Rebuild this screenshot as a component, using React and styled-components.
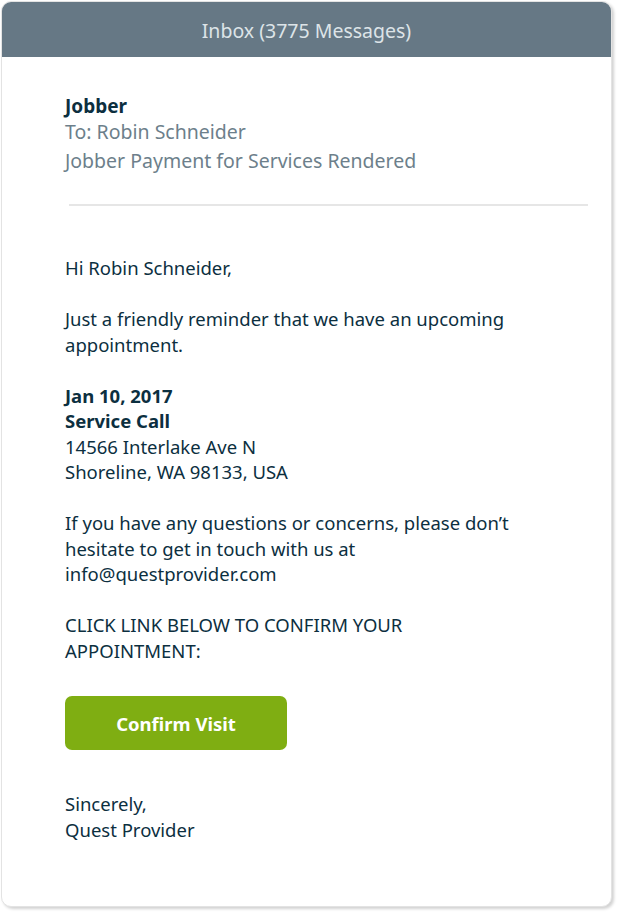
import React from 'react';
import styled, { createGlobalStyle } from 'styled-components';

const GlobalStyle = createGlobalStyle`
  html, body {
    margin: 0;
    padding: 0;
    background: #ffffff;
  }
  body {
    font-family: 'Noto Sans', 'Open Sans', sans-serif;
  }
`;

const Page = styled.div`
  padding: 1px 8px 8px 1px;
`;

const Card = styled.div`
  width: 611px;
  box-sizing: border-box;
  border-radius: 10px;
  background: #ffffff;
  border: 1px solid #e3e3e3;
  box-shadow: 2px 2px 3px rgba(0, 0, 0, 0.18);
  overflow: hidden;
`;

const TopBar = styled.div`
  height: 55px;
  padding-top: 1px;
  box-sizing: border-box;
  background: #667885;
  color: #dde4e8;
  font-size: 19.5px;
  display: flex;
  align-items: center;
  justify-content: center;
`;

const Meta = styled.div`
  padding: 36px 0 0 63px;
  display: flex;
  flex-direction: column;
`;

const Sender = styled.div`
  font-size: 19px;
  font-weight: 700;
  color: #0c2f3f;
  line-height: 26px;
`;

const MetaLine = styled.div`
  font-size: 19.5px;
  color: #6d7f8b;
  line-height: ${p => p.$lh || 26}px;
`;

const Divider = styled.hr`
  border: none;
  height: 2px;
  background: #e6e6e6;
  margin: 28px 23px 0 67px;
`;

const Body = styled.div`
  padding: 49px 0 64px 63px;
  width: 462px;
  color: #0c2f3f;
  font-size: 18.5px;
  line-height: 25.5px;
`;

const Para = styled.p`
  margin: 0 0 ${p => (p.$last ? 0 : 25.5)}px;
`;

const Strong = styled.div`
  font-weight: 700;
`;

const ConfirmButton = styled.button`
  display: block;
  width: 222px;
  height: 54px;
  border: none;
  border-radius: 7px;
  background: #7fae12;
  color: #ffffff;
  font-family: inherit;
  font-size: 18.5px;
  font-weight: 700;
  margin: 33px 0 41px 0;
  cursor: pointer;
`;

export default function App() {
  return (
    <>
      <GlobalStyle />
      <Page>
        <Card>
          <TopBar>Inbox (3775 Messages)</TopBar>
          <Meta>
            <Sender>Jobber</Sender>
            <MetaLine>To: Robin Schneider</MetaLine>
            <MetaLine $lh={31}>Jobber Payment for Services Rendered</MetaLine>
          </Meta>
          <Divider />
          <Body>
            <Para>Hi Robin Schneider,</Para>
            <Para>Just a friendly reminder that we have an upcoming appointment.</Para>
            <Para>
              <Strong>Jan 10, 2017</Strong>
              <Strong>Service Call</Strong>
              14566 Interlake Ave N<br />
              Shoreline, WA 98133, USA
            </Para>
            <Para>
              If you have any questions or concerns, please don’t hesitate to get in touch with us at info@questprovider.com
            </Para>
            <Para $last>CLICK LINK BELOW TO CONFIRM YOUR APPOINTMENT:</Para>
            <ConfirmButton>Confirm Visit</ConfirmButton>
            <Para $last>
              Sincerely,<br />
              Quest Provider
            </Para>
          </Body>
        </Card>
      </Page>
    </>
  );
}
